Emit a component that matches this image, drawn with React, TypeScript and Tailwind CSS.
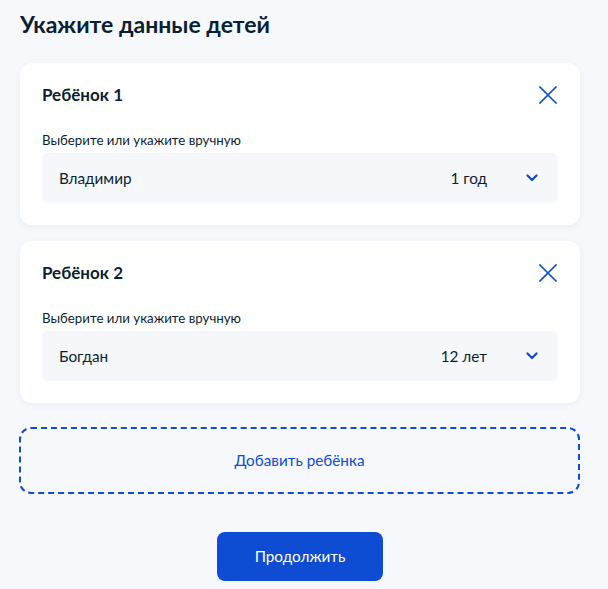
import React from "react";

function CloseIcon() {
  return (
    <svg width="18" height="18" viewBox="0 0 18 18" fill="none">
      <path d="M1 1L17 17M17 1L1 17" stroke="#0d4cd3" strokeWidth="1.6" strokeLinecap="square" />
    </svg>
  );
}

function Chevron() {
  return (
    <svg width="12" height="8" viewBox="0 0 12 8" fill="none">
      <path d="M1.5 1.5L6 6L10.5 1.5" stroke="#0d4cd3" strokeWidth="2.2" strokeLinecap="round" strokeLinejoin="round" />
    </svg>
  );
}

function ChildCard({ title, name, age }: { title: string; name: string; age: string }) {
  return (
    <div className="bg-white rounded-[12px] shadow-[0_2px_6px_rgba(30,60,120,0.06)] pt-[20px] pb-[22px] pl-[22px] pr-[22px]">
      <div className="flex items-center justify-between h-[24px]">
        <div className="text-[17px] leading-[24px] font-bold text-[#0b1f33]">{title}</div>
        <div className="pr-[1px]">
          <CloseIcon />
        </div>
      </div>
      <div className="mt-[23px] text-[13.3px] leading-[20px] text-[#0b1f33]">Выберите или укажите вручную</div>
      <div className="mt-[3px] h-[50px] rounded-[6px] bg-[#f5f7fa] flex items-center pl-[17px] pr-[20px]">
        <div className="flex-1 text-[15.3px] text-[#0b1f33]">{name}</div>
        <div className="text-[15.3px] text-[#0b1f33] mr-[39px]">{age}</div>
        <Chevron />
      </div>
    </div>
  );
}

export default function App() {
  return (
    <div
      className="w-[608px] h-[589px] bg-[#f6f8fc] overflow-hidden pl-[20px] pr-[28px] pt-[8px]"
      style={{ fontFamily: "Lato, 'Noto Sans', sans-serif" }}
    >
      <h1 className="text-[23px] leading-[32px] font-bold text-[#0b1f33]">Укажите данные детей</h1>
      <div className="mt-[23px] flex flex-col gap-[16px]">
        <ChildCard title="Ребёнок 1" name="Владимир" age="1 год" />
        <ChildCard title="Ребёнок 2" name="Богдан" age="12 лет" />
      </div>
      <div className="mt-[24px] -ml-[1px] h-[67px] rounded-[12px] border-2 border-dashed border-[#0d4cd3] flex items-center justify-center text-[15.3px] text-[#0d4cd3]">
        Добавить ребёнка
      </div>
      <div className="mt-[38px] flex justify-center">
        <button className="w-[166px] h-[49px] rounded-[8px] bg-[#0d4cd3] text-white text-[15.3px]">Продолжить</button>
      </div>
    </div>
  );
}
